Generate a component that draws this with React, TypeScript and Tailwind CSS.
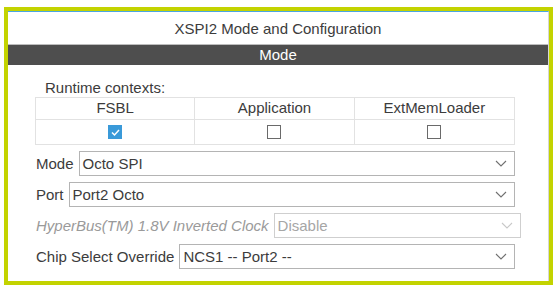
const font = { fontFamily: '"Liberation Sans", Arial, sans-serif' };

function Chevron({ light }: { light?: boolean }) {
  return (
    <svg width="12" height="7" viewBox="0 0 12 7" className="shrink-0">
      <path
        d="M1 1 L6 6 L11 1"
        fill="none"
        stroke={light ? "#c8c8c8" : "#707070"}
        strokeWidth="1.1"
      />
    </svg>
  );
}

function SelectRow({
  label,
  value,
  disabled,
  wide,
}: {
  label: string;
  value: string;
  disabled?: boolean;
  wide?: boolean;
}) {
  return (
    <div className={`flex items-center gap-[5px] h-[25px] ${wide ? "w-[485px]" : "w-[479px]"}`}>
      <span
        className={`text-[15px] leading-none whitespace-nowrap ${
          disabled ? "italic text-[#9a9a9a]" : "text-[#3c3c3c]"
        }`}
      >
        {label}
      </span>
      <div
        className={`flex-1 h-[25px] flex items-center justify-between pl-[3px] pr-[7px] bg-white border ${
          disabled ? "border-[#cfcfcf] text-[#a6a6a6]" : "border-[#b4b4b4] text-[#3c3c3c]"
        }`}
      >
        <span className="text-[15px] leading-none">{value}</span>
        <Chevron light={disabled} />
      </div>
    </div>
  );
}

function Checkbox({ checked }: { checked?: boolean }) {
  if (checked) {
    return (
      <div className="w-[14px] h-[14px] bg-[#3a9ad9] flex items-center justify-center">
        <svg width="11" height="11" viewBox="0 0 11 11">
          <path d="M2 5.5 L4.5 8 L9 3" fill="none" stroke="white" strokeWidth="1.5" />
        </svg>
      </div>
    );
  }
  return <div className="w-[14px] h-[14px] border border-[#6a6a6a] bg-white" />;
}

export default function App() {
  const cols = [
    { name: "FSBL", checked: true },
    { name: "Application", checked: false },
    { name: "ExtMemLoader", checked: false },
  ];

  return (
    <div className="w-[558px] h-[291px] bg-white pt-[7px] pl-[4px]" style={font}>
      <div className="w-[549px] h-[278px] border-4 border-[#c3d300] bg-white">
        <div className="h-full border-t border-t-[#4aa7e2] border-r border-r-[#d6d6d6] flex flex-col">
          <div className="h-[32px] pt-[3px] flex items-center justify-center text-[15px] text-[#3c3c3c]">
            XSPI2 Mode and Configuration
          </div>
          <div className="border-t border-t-[#bdbdbd] h-[21px] bg-[#4e4e4e] flex items-center justify-center text-[15px] text-white">
            Mode
          </div>

          <div className="pl-[28px] flex flex-col">
            <div className="mt-[15px] h-[17px] pl-[9px] flex items-center text-[15px] text-[#3c3c3c]">
              Runtime contexts:
            </div>
            <div className="w-[480px] -ml-px grid grid-cols-3 border border-[#e2e2e2]">
              {cols.map((c, i) => (
                <div
                  key={c.name}
                  className={`h-[22px] flex items-center justify-center text-[15px] text-[#3c3c3c] border-b border-[#e2e2e2] ${
                    i < 2 ? "border-r" : ""
                  }`}
                >
                  {c.name}
                </div>
              ))}
              {cols.map((c, i) => (
                <div
                  key={c.name + "-cb"}
                  className={`h-[24px] flex items-center justify-center border-[#e2e2e2] ${
                    i < 2 ? "border-r" : ""
                  }`}
                >
                  <Checkbox checked={c.checked} />
                </div>
              ))}
            </div>

            <div className="mt-[6px] flex flex-col gap-[6px]">
              <SelectRow label="Mode" value="Octo SPI" />
              <SelectRow label="Port" value="Port2 Octo" />
              <SelectRow label="HyperBus(TM) 1.8V Inverted Clock" value="Disable" disabled wide />
              <SelectRow label="Chip Select Override" value="NCS1 -- Port2 --" />
            </div>
          </div>
        </div>
      </div>
    </div>
  );
}
